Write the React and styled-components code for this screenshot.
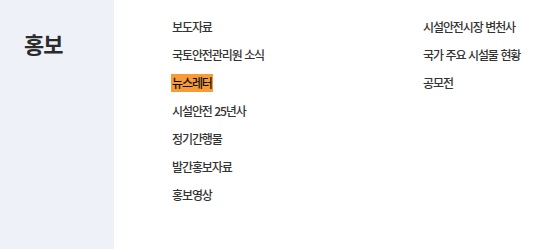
import React from "react";
import styled, { createGlobalStyle } from "styled-components";

const GlobalStyle = createGlobalStyle`
  html, body {
    margin: 0;
    padding: 0;
    background: #ffffff;
  }
  body {
    font-family: "Noto Sans CJK KR", "Noto Sans", sans-serif;
    color: #333333;
  }
`;

const leftMenu = [
  "보도자료",
  "국토안전관리원 소식",
  "뉴스레터",
  "시설안전 25년사",
  "정기간행물",
  "발간홍보자료",
  "홍보영상",
];

const rightMenu = ["시설안전시장 변천사", "국가 주요 시설물 현황", "공모전"];

const App = () => {
  return (
    <>
      <GlobalStyle />
      <Wrap>
        <Aside>
          <Title>홍보</Title>
        </Aside>
        <MenuArea>
          <Column $width={251}>
            {leftMenu.map((item) => (
              <Item key={item}>
                <ItemText $active={item === "뉴스레터"}>{item}</ItemText>
              </Item>
            ))}
          </Column>
          <Column>
            {rightMenu.map((item) => (
              <Item key={item}>
                <ItemText>{item}</ItemText>
              </Item>
            ))}
          </Column>
        </MenuArea>
      </Wrap>
    </>
  );
};

const Wrap = styled.div`
  display: flex;
  width: 560px;
  height: 249px;
`;

const Aside = styled.div`
  width: 114px;
  flex-shrink: 0;
  background: #eef1f7;
  padding: 31px 0 0 24px;
  box-sizing: border-box;
`;

const Title = styled.h2`
  margin: 0;
  font-size: 22px;
  font-weight: 700;
  line-height: 24px;
  letter-spacing: -1px;
  color: #2b2b2b;
`;

const MenuArea = styled.div`
  display: flex;
  padding: 18px 0 0 58px;
`;

const Column = styled.ul`
  list-style: none;
  margin: 0;
  padding: 0;
  width: ${(p) => (p.$width ? `${p.$width}px` : "auto")};
  display: flex;
  flex-direction: column;
  gap: 10px;
`;

const Item = styled.li`
  height: 18px;
  line-height: 18px;
  font-size: 12px;
  font-weight: 500;
  letter-spacing: -1.1px;
  word-spacing: 1px;
  white-space: nowrap;
`;

const ItemText = styled.span`
  display: inline-block;
  padding: 0 ${(p) => (p.$active ? "1px" : "0")};
  margin-left: ${(p) => (p.$active ? "-1px" : "0")};
  background: ${(p) => (p.$active ? "#f99b35" : "transparent")};
  color: ${(p) => (p.$active ? "#111111" : "#333333")};
`;

export default App;
